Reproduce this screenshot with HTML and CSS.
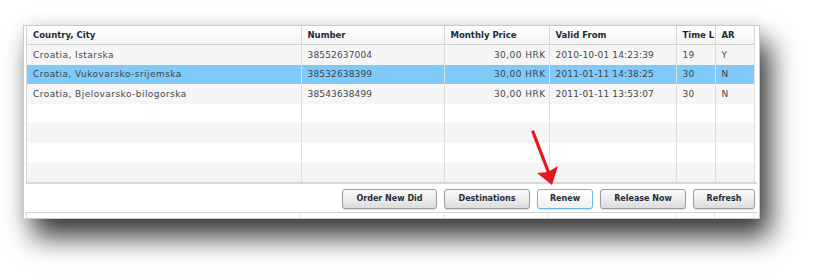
FILE: index.html
```html
<!DOCTYPE html>
<html>
<head>
<meta charset="utf-8">
<link rel="stylesheet" href="styles.css">
</head>
<body>
<div class="frame">
  <div class="panel">
    <div class="grid">
      <table class="tbl">
        <colgroup>
          <col class="c1"><col class="c2"><col class="c3"><col class="c4"><col class="c5"><col class="c6">
        </colgroup>
        <thead>
          <tr><th>Country, City</th><th>Number</th><th>Monthly Price</th><th>Valid From</th><th>Time L</th><th>AR</th></tr>
        </thead>
        <tbody>
          <tr class="alt"><td class="country">Croatia, Istarska</td><td>38552637004</td><td class="num">30,00 HRK</td><td>2010-10-01 14:23:39</td><td>19</td><td>Y</td></tr>
          <tr class="sel"><td class="country">Croatia, Vukovarsko-srijemska</td><td>38532638399</td><td class="num">30,00 HRK</td><td>2011-01-11 14:38:25</td><td>30</td><td>N</td></tr>
          <tr class="alt"><td class="country">Croatia, Bjelovarsko-bilogorska</td><td>38543638499</td><td class="num">30,00 HRK</td><td>2011-01-11 13:53:07</td><td>30</td><td>N</td></tr>
          <tr><td>&nbsp;</td><td></td><td></td><td></td><td></td><td></td></tr>
          <tr class="alt"><td>&nbsp;</td><td></td><td></td><td></td><td></td><td></td></tr>
          <tr><td>&nbsp;</td><td></td><td></td><td></td><td></td><td></td></tr>
          <tr class="alt"><td>&nbsp;</td><td></td><td></td><td></td><td></td><td></td></tr>
        </tbody>
      </table>
    </div>
    <div class="toolbar">
      <button class="btn w1">Order New Did</button>
      <button class="btn w2">Destinations</button>
      <button class="btn w3 focus">Renew</button>
      <button class="btn w2">Release Now</button>
      <button class="btn w4">Refresh</button>
    </div>
    <div class="strip">
      <span class="s1"></span><span class="s2"></span><span class="s3"></span><span class="s4"></span><span class="s5"></span><span class="s6"></span>
    </div>
  </div>
  <svg class="arrow" width="818" height="273" viewBox="0 0 818 273">
    <line x1="533" y1="132" x2="548" y2="171" stroke="#e5161c" stroke-width="3.2" stroke-linecap="round"/>
    <polygon points="537,173 552,185 558,166 548,172" fill="#e5161c"/>
  </svg>
</div>
</body>
</html>
```

FILE: styles.css
```css
html, body {
  margin: 0;
  padding: 0;
  background: #ffffff;
}

.frame {
  position: relative;
  width: 818px;
  height: 273px;
  overflow: hidden;
  padding-top: 25px;
  box-sizing: border-box;
}

.panel {
  margin-left: 23px;
  width: 737px;
  box-sizing: border-box;
  border: 1px solid #cacaca;
  background: #ffffff;
  padding: 0 2px 0 2px;
  box-shadow: 10px 18px 26px rgba(0, 0, 0, 0.78), 0 0 14px rgba(0, 0, 0, 0.08);
  font-family: "DejaVu Sans", Verdana, sans-serif;
}

.grid {
  border-left: 1px solid #d6d6d6;
  border-bottom: 2px solid #d9d9d9;
  background: #ffffff;
}

.tbl {
  table-layout: fixed;
  border-collapse: collapse;
  width: 727px;
}

.c1 { width: 274px; }
.c2 { width: 143px; }
.c3 { width: 105px; }
.c4 { width: 127px; }
.c5 { width: 39px; }
.c6 { width: 39px; }

.tbl th {
  height: 18px;
  padding: 0 0 0 6px;
  text-align: left;
  font-size: 8.5px;
  font-weight: bold;
  color: #1d2b35;
  background: linear-gradient(#ffffff, #f3f3f3);
  border-right: 1px solid #d8d8d8;
  border-bottom: 1px solid #d0d0d0;
  white-space: nowrap;
  overflow: hidden;
}

.tbl td {
  height: 19.6px;
  padding: 0 0 0 6px;
  font-size: 9px;
  color: #45484b;
  letter-spacing: 0.15px;
  border-right: 1px solid #dedede;
  white-space: nowrap;
  overflow: hidden;
  line-height: 12px;
}

.tbl td.country {
  letter-spacing: 0.45px;
}

.tbl td.num {
  text-align: right;
  padding: 0 3px 0 0;
  letter-spacing: 0.45px;
}

.tbl tr.alt td {
  background: #f5f5f5;
}

.tbl tr.sel td {
  background: #7fcaf8;
  color: #3a4650;
}

.toolbar {
  display: flex;
  justify-content: flex-end;
  align-items: center;
  gap: 7px;
  height: 28px;
  padding: 0 2px 0 0;
  border-bottom: 1px solid #d2d2d2;
}

.btn {
  height: 20px;
  margin-top: 1px;
  padding: 0;
  border: 1px solid #9c9c9c;
  border-radius: 3px;
  background: linear-gradient(#fbfbfb, #e9e9e9 60%, #dcdcdc);
  font-family: "DejaVu Sans", Verdana, sans-serif;
  font-size: 8px;
  font-weight: bold;
  color: #1f2f3a;
  box-shadow: 0 1px 1px rgba(0, 0, 0, 0.15);
}

.btn.focus {
  border: 1px solid #6fb6ea;
  background: linear-gradient(#ffffff, #f1f1f1);
}

.w1 { width: 95px; }
.w2 { width: 86px; }
.w3 { width: 56px; }
.w4 { width: 62px; }

.strip {
  display: flex;
  height: 5px;
  border-left: 1px solid #d6d6d6;
}

.strip span {
  box-sizing: border-box;
  border-right: 1px solid #e6e6e6;
}

.s1 { width: 274px; }
.s2 { width: 143px; }
.s3 { width: 105px; }
.s4 { width: 127px; }
.s5 { width: 39px; }
.s6 { width: 39px; }

.arrow {
  position: absolute;
  left: 0;
  top: 0;
  pointer-events: none;
}
```
